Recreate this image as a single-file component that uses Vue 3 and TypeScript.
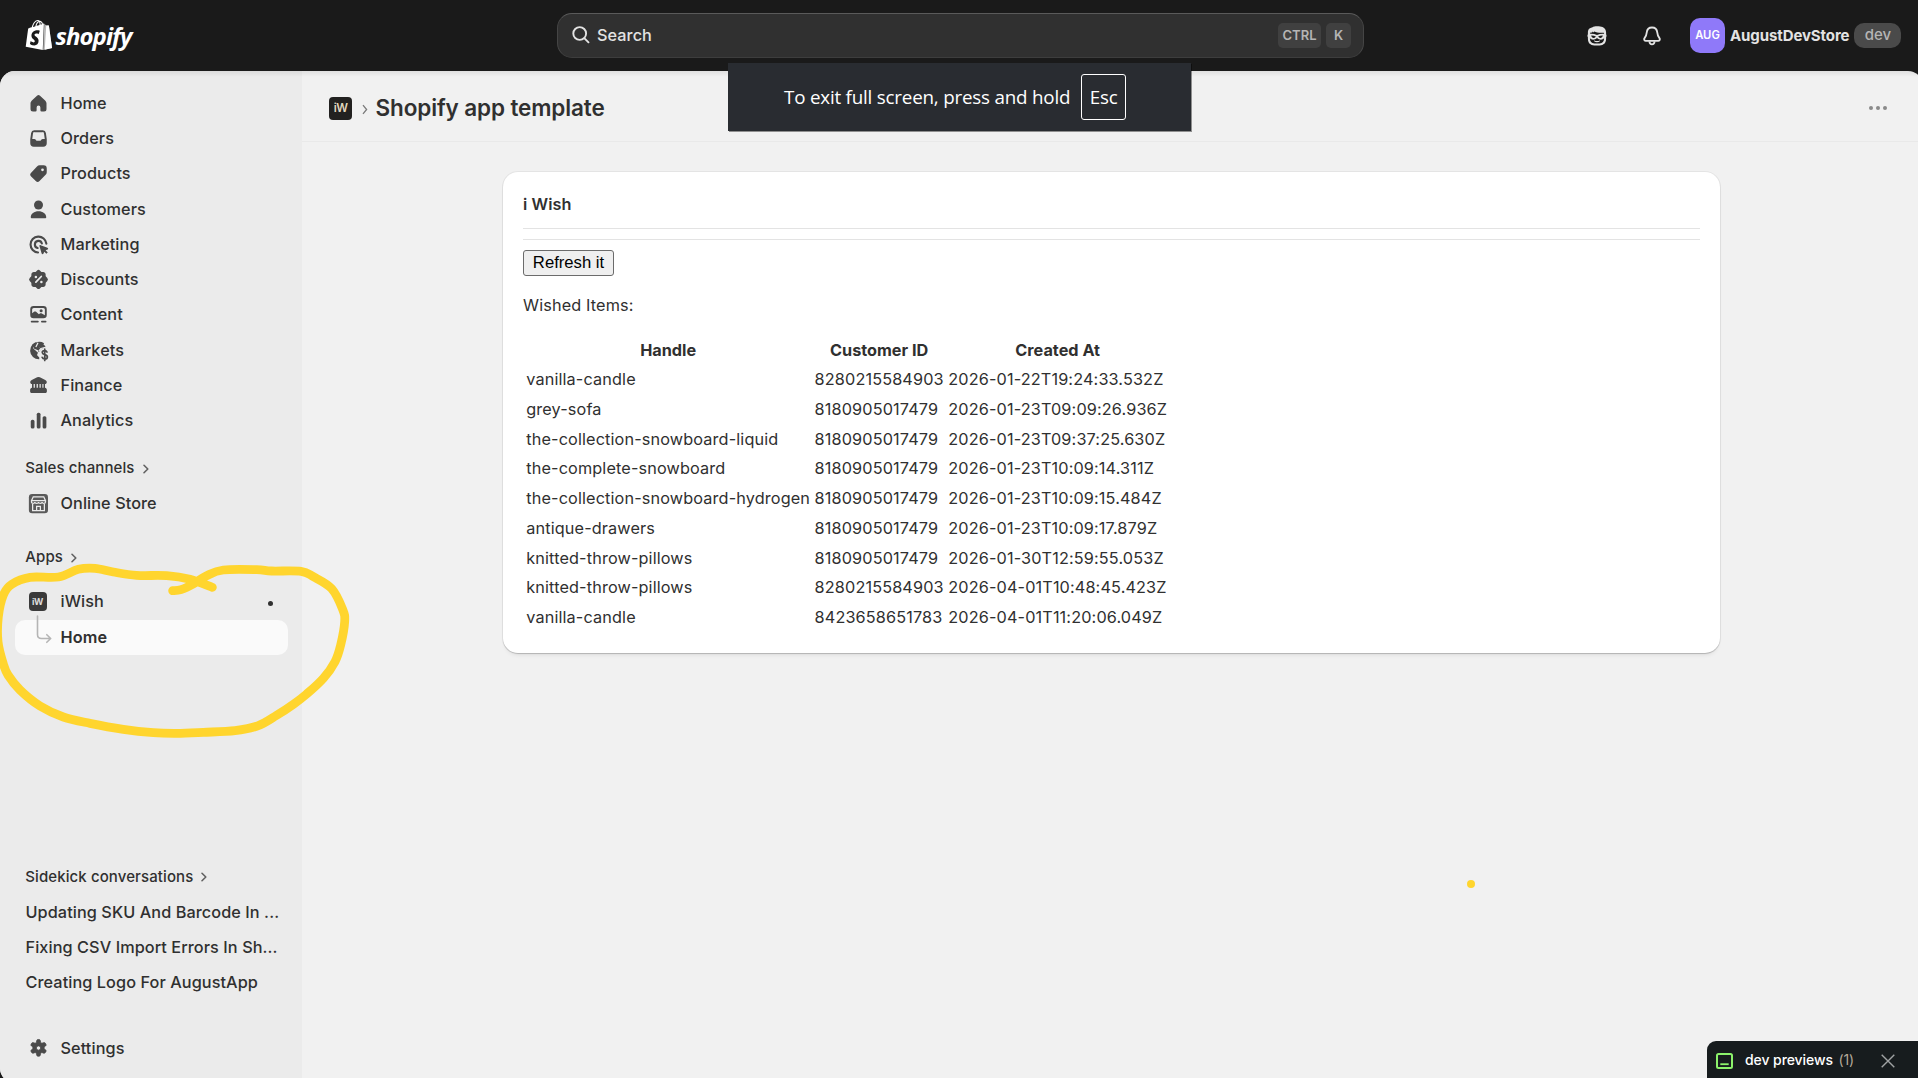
<script setup lang="ts">
interface NavItem {
  label: string
  icon: string
}

interface Wish {
  handle: string
  customer: string
  created: string
}

const bg = '#ebebeb'

const icons: Record<string, string> = {
  home: '<path d="M8.8 3.7a1.75 1.75 0 0 1 2.4 0l4.1 3.8c.7.7 1.1 1.6 1.1 2.5v4.4a2 2 0 0 1-2 2h-1.9a1 1 0 0 1-1-1v-2.3a1.5 1.5 0 0 0-3 0v2.3a1 1 0 0 1-1 1H5.6a2 2 0 0 1-2-2V10c0-1 .4-1.9 1.1-2.5z"/>',
  orders: '<path fill-rule="evenodd" d="M6.5 3.4h7a2.5 2.5 0 0 1 2.4 2.1l.7 5v3.3a2.9 2.9 0 0 1-2.8 2.8H6.2a2.9 2.9 0 0 1-2.8-2.8v-3.3l.7-5a2.5 2.5 0 0 1 2.4-2.1zM6.7 4.9a1.1 1.1 0 0 0-1.1 1L5 10.3h1.6c.5 0 .9.2 1.2.6l.4.6c.2.3.4.3.6.3h2.4c.3 0 .5-.1.6-.3l.4-.6c.3-.4.7-.6 1.2-.6H15l-.6-4.4a1.1 1.1 0 0 0-1.1-1z"/>',
  products: '<path fill-rule="evenodd" d="M10.9 3.4h3.2a2.5 2.5 0 0 1 2.5 2.5v3a3 3 0 0 1-.9 2.1l-4.9 5a2.1 2.1 0 0 1-3 0l-3.7-3.7a2.1 2.1 0 0 1 0-3l4.7-5a3 3 0 0 1 2.1-.9zM13.2 5.9a1.1 1.1 0 1 0 0 2.2 1.1 1.1 0 0 0 0-2.2z"/>',
  customers: '<circle cx="10" cy="6.4" r="3.6"/><path d="M3.8 16.2c0-3 2.8-4.9 6.2-4.9s6.2 1.9 6.2 4.9a.7.7 0 0 1-.7.7h-11a.7.7 0 0 1-.7-.7z"/>',
  marketing: '<g fill="none" stroke="currentColor" stroke-width="1.7" stroke-linecap="round"><path d="M16.3 9.3A6.35 6.35 0 1 0 9.6 16.35"/><path d="M12.7 9.2A2.85 2.85 0 1 0 9.3 12.75"/></g><path d="M10.8 11.4c-.2-.6.3-1.1.9-.9l5.5 2c.7.3.7 1.2 0 1.5l-1.5.6 1.7 1.7-1.1 1.1-1.7-1.7-.6 1.5c-.3.7-1.2.7-1.5 0z"/>',
  discounts: `<path d="M8.7 2.9a1.8 1.8 0 0 1 2.6 0l.6.6c.3.3.6.4 1 .4h.9c1 0 1.9.9 1.9 1.9v.9c0 .4.1.7.4 1l.8.8a2 2 0 0 1 0 2.8l-.8.8c-.3.3-.4.6-.4 1v.9c0 1-.9 1.9-1.9 1.9h-.9c-.4 0-.7.1-1 .4l-.6.6a1.8 1.8 0 0 1-2.6 0l-.6-.6c-.3-.3-.6-.4-1-.4h-.9c-1 0-1.9-.9-1.9-1.9v-.9c0-.4-.1-.7-.4-1l-.8-.8a2 2 0 0 1 0-2.8l.8-.8c.3-.3.4-.6.4-1v-.9c0-1 .9-1.9 1.900-1.9h.9c.4 0 .7-.1 1-.4z"/><path d="M7.9 12.1l4.300-4.500" stroke="${bg}" stroke-width="1.4" stroke-linecap="round"/><circle cx="7.900" cy="7.900" r="1" fill="${bg}"/><circle cx="12.300" cy="12" r="1" fill="${bg}"/>`,
  content: '<path fill-rule="evenodd" d="M6 3.2h8a2.6 2.6 0 0 1 2.6 2.6v4.6A2.6 2.6 0 0 1 14 13H6a2.6 2.6 0 0 1-2.6-2.6V5.8A2.6 2.6 0 0 1 6 3.2zM6.2 4.7A1.3 1.3 0 0 0 4.9 6v3l1.5-1.2c.5-.4 1.2-.4 1.7 0l2.2 2 .8-.6c.5-.3 1.1-.3 1.6 0l2.4 1.3V6a1.3 1.3 0 0 0-1.3-1.3zM12.1 5.7a1.25 1.25 0 1 1 0 2.5 1.25 1.25 0 0 1 0-2.5z"/><path d="M4.5 15.6h5M12.700 15.600h3" stroke="currentColor" stroke-width="1.4" stroke-linecap="round"/>',
  markets: `<path d="M10 3a7 7 0 1 0 .6 14v-1.5l-1.300-1.300c-.4-.4-.5-1-.2-1.500l.5-1-3.500-3.200c-.6-.6-.5-1.500.2-1.900l1.900-1.100L8 3.300z"/><path d="M9.200 3.100c-1.700.3-3.200 1.100-4.300 2.500l1.700 3 3 1.200.6 1.600 1.600-2.200-1-1.600 1.800-.5 1.900-3A7 7 0 0 0 9.200 3.100z"/><path d="M13.300 4.500l-2.500 3.200 1.300 1.200 3.600-1.700a7 7 0 0 0-2.400-2.700z"/><path d="M9.600 3.800l-1.700 3.400M10.300 10.400l1.700-2 3.700-1" fill="none" stroke="${bg}" stroke-width="1"/><path d="M16.800 11.200c-.3-.7-.9-1.100-1.900-1.100-1.100 0-1.900.6-1.900 1.500 0 2.200 4.100 1.100 4.100 3.500 0 1-.9 1.600-2 1.600s-1.900-.5-2.200-1.300M15 8.900v9" fill="none" stroke="currentColor" stroke-width="1.350" stroke-linecap="round"/>`,
  finance: '<path fill-rule="evenodd" d="M8.9 3.4a2.4 2.4 0 0 1 2.2 0l4.3 2.1c.8.4 1.2 1 1.2 1.8 0 .9-.6 1.5-1.4 1.5v2.9c.9.1 1.5.9 1.5 1.7v1.4c0 .7-.5 1.2-1.2 1.2h-11c-.7 0-1.2-.5-1.2-1.2v-1.4c0-.8.6-1.6 1.5-1.7V8.8c-.8 0-1.4-.6-1.4-1.5 0-.8.4-1.4 1.2-1.8zM6.1 8.8v2.9h1V8.8zM8.5 8.8v2.9h1V8.8zM10.8 8.800v2.900h1V8.800zM13.100 8.800v2.900h.9V8.800z"/>',
  analytics: '<rect x="3.8" y="9.4" width="3" height="7" rx="1.3"/><rect x="8.6" y="3.7" width="3" height="12.7" rx="1.3"/><rect x="13.3" y="6.5" width="3" height="9.9" rx="1.3"/>',
  settings: '<path fill-rule="evenodd" stroke="currentColor" stroke-width=".6" d="M8.5 3.900c.1-.7.6-1.100 1.200-1.100h.6c.6 0 1.100.4 1.200 1.100l.2 1.300 1 .6 1.300-.5c.6-.2 1.200 0 1.500.5l.4.7c.3.5.2 1.200-.3 1.500l-1.100.9v1.200l1.100.9c.5.4.6 1 .3 1.500l-.4.7c-.3.5-.9.7-1.500.5l-1.300-.5-1 .6-.2 1.300c-.1.7-.6 1.100-1.200 1.100h-.6c-.6 0-1.100-.4-1.200-1.100l-.2-1.300-1-.6-1.300.5c-.6.2-1.200 0-1.500-.5l-.4-.7c-.3-.5-.2-1.100.3-1.500l1.100-.9V8.900L4.400 8c-.5-.3-.6-1-.3-1.500l.4-.7c.3-.5.9-.7 1.500-.5l1.300.5 1-.6zM10 7.900a1.700 1.700 0 1 0 0 3.400 1.700 1.700 0 0 0 0-3.400z"/>',
}

const nav: NavItem[] = [
  { label: 'Home', icon: 'home' },
  { label: 'Orders', icon: 'orders' },
  { label: 'Products', icon: 'products' },
  { label: 'Customers', icon: 'customers' },
  { label: 'Marketing', icon: 'marketing' },
  { label: 'Discounts', icon: 'discounts' },
  { label: 'Content', icon: 'content' },
  { label: 'Markets', icon: 'markets' },
  { label: 'Finance', icon: 'finance' },
  { label: 'Analytics', icon: 'analytics' },
]

const conversations: string[] = [
  'Updating SKU And Barcode In ...',
  'Fixing CSV Import Errors In Sh...',
  'Creating Logo For AugustApp',
]

const wishes: Wish[] = [
  { handle: 'vanilla-candle', customer: '8280215584903', created: '2026-01-22T19:24:33.532Z' },
  { handle: 'grey-sofa', customer: '8180905017479', created: '2026-01-23T09:09:26.936Z' },
  { handle: 'the-collection-snowboard-liquid', customer: '8180905017479', created: '2026-01-23T09:37:25.630Z' },
  { handle: 'the-complete-snowboard', customer: '8180905017479', created: '2026-01-23T10:09:14.311Z' },
  { handle: 'the-collection-snowboard-hydrogen', customer: '8180905017479', created: '2026-01-23T10:09:15.484Z' },
  { handle: 'antique-drawers', customer: '8180905017479', created: '2026-01-23T10:09:17.879Z' },
  { handle: 'knitted-throw-pillows', customer: '8180905017479', created: '2026-01-30T12:59:55.053Z' },
  { handle: 'knitted-throw-pillows', customer: '8280215584903', created: '2026-04-01T10:48:45.423Z' },
  { handle: 'vanilla-candle', customer: '8423658651783', created: '2026-04-01T11:20:06.049Z' },
]

// Pen stroke sampled at a third of a pixel, smoothed with Catmull-Rom segments.
const penPoints: [number, number][] = [
  [518, 452], [543, 449], [580, 432], [620, 407], [670, 390], [770, 389], [815, 393], [903, 394],
  [940, 410], [995, 446], [1028, 508], [1034, 545], [1022, 615], [1005, 665], [970, 715], [920, 762],
  [880, 793], [830, 826], [775, 857], [705, 872], [610, 877], [530, 880], [460, 878], [370, 868],
  [270, 850], [190, 831], [120, 798], [60, 750], [24, 705], [10, 672], [-6, 605], [-5, 530],
  [10, 465], [35, 433], [90, 412], [175, 411], [235, 388], [285, 385], [340, 396], [410, 406],
  [500, 407], [570, 418], [637, 442],
]

function smooth(points: [number, number][]): string {
  const at = (i: number) => points[Math.max(0, Math.min(points.length - 1, i))]
  const f = (n: number) => (n / 3).toFixed(2)
  let d = `M${f(points[0][0])} ${f(points[0][1])}`
  for (let i = 0; i < points.length - 1; i++) {
    const [a, b, c, e] = [at(i - 1), at(i), at(i + 1), at(i + 2)]
    d += `C${f(b[0] + (c[0] - a[0]) / 6)} ${f(b[1] + (c[1] - a[1]) / 6)} ${f(c[0] - (e[0] - b[0]) / 6)} ${f(c[1] - (e[1] - b[1]) / 6)} ${f(c[0])} ${f(c[1])}`
  }
  return d
}

const penPath = smooth(penPoints)
</script>

<template>
  <div class="screen">
    <header class="topbar">
      <div class="brand">
        <svg class="bag" viewBox="0 0 24 24" width="30" height="30">
          <path fill="#b9b9b9" d="M15.337 23.979l7.216-1.561s-2.604-17.613-2.625-17.730c-.018-.116-.114-.192-.211-.192s-1.929-.136-1.929-.136-1.275-1.274-1.439-1.411c-.045-.037-.075-.057-.121-.074l-.914 21.104z" />
          <path fill="#fff" d="M16.600 23.700l5.953-1.282s-2.604-17.613-2.625-17.730c-.018-.116-.114-.192-.211-.192s-1.929-.136-1.929-.136z" />
          <path fill="#fff" d="M11.710 11.305s-.81-.424-1.774-.424c-1.447 0-1.504.906-1.504 1.141 0 1.232 3.240 1.715 3.240 4.629 0 2.295-1.440 3.760-3.406 3.760-2.354 0-3.540-1.465-3.540-1.465l.646-2.086s1.245 1.066 2.280 1.066c.675 0 .975-.545.975-.932 0-1.619-2.654-1.694-2.654-4.359-.034-2.237 1.571-4.416 4.827-4.416 1.257 0 1.875.361 1.875.361l-.945 2.715-.02.01zM11.170.83c.136 0 .271.038.405.135-.984.465-2.064 1.639-2.508 3.992-.656.213-1.293.405-1.889.578C7.697 3.750 8.951.84 11.170.84V.83zm1.235 2.949v.135c-.754.232-1.583.484-2.394.736.466-1.777 1.333-2.645 2.085-2.971.193.501.309 1.176.309 2.100zm.539-2.234c.694.074 1.141.867 1.429 1.755-.349.114-.735.231-1.158.366v-.252c0-.752-.096-1.371-.271-1.871v.002zm2.992 1.289c-.02 0-.06.021-.078.021s-.289.075-.714.210c-.423-1.233-1.176-2.370-2.508-2.370h-.115C12.135.209 11.669 0 11.265 0 8.159 0 6.675 3.877 6.210 5.846c-1.194.365-2.063.636-2.160.674-.675.213-.694.232-.772.870-.075.462-1.830 14.063-1.830 14.063L15.009 24l.927-21.166z" />
        </svg>
        <span class="wordmark">shopify</span>
      </div>
      <div class="search">
        <svg width="20" height="20" viewBox="0 0 20 20" fill="none" stroke="#e3e3e3" stroke-width="1.900" stroke-linecap="round">
          <circle cx="8.700" cy="8.500" r="6.400" />
          <path d="M13.500 13.300l4 4" />
        </svg>
        <span class="search-label">Search</span>
        <kbd class="ctrl">CTRL</kbd>
        <kbd class="key">K</kbd>
      </div>
      <div class="account">
        <svg class="sidekick" width="22" height="22" viewBox="0 0 22 22">
          <path fill="#e3e3e3" fill-rule="evenodd" d="M6.500 2.200C8 .9 14 .9 16.500 2.100 19 3.200 20 5 20.100 7.500v1.800c.6.7.6 2.300 0 3v1.500c0 4.200-2.500 6.600-6.400 6.600H8.300c-3.900 0-6.400-2.400-6.400-6.600v-1.500c-.6-.7-.6-2.300 0-3V6.800c.2-1.900 1.100-3.300 2.600-3.700zM4.800 7.200l-.9 1.700c2.500-.2 4.900.2 7.100 1.200 2.200-1 4.600-1.400 7.100-1.200l-.3-1.200c-4 .4-7.200-.1-9.600-1.300l-.8 1.200-.6-1.100-1 1.300zM5.200 10.600c.3 1.800 1.400 2.500 2.800 2.300.9-.2 1.600-.8 1.900-1.400-1.400-.7-3-1-4.700-.9zm11.600 0c-1.700-.1-3.300.2-4.700.9.300.6 1 1.200 1.900 1.400 1.400.2 2.500-.5 2.800-2.300zM3.900 13.300c.1 3.200 1.500 5.200 4.500 5.200h5.200c3 0 4.400-2 4.500-5.200-1.700 1.800-4.800 1.900-7.100-.3-2.300 2.200-5.400 2.100-7.100.3zM8.300 15.500c1.700.7 3.700.700 5.400 0 .4 0 .5.500.2.800-1.500 1.300-4.300 1.300-5.800 0-.3-.3-.2-.8.200-.8z" />
        </svg>
        <svg class="bell" width="20" height="22" viewBox="0 0 20 22" fill="none" stroke="#e3e3e3" stroke-width="1.800" stroke-linejoin="round">
          <path d="M10 2.500c-3 0-5 2.200-5.300 5.100-.2 2.500-.7 3.600-2 5.300-1 1.300-.7 2.700 1 3h12.600c1.700-.3 2-1.700 1-3-1.300-1.700-1.800-2.800-2-5.300C15 4.700 13 2.500 10 2.500z" />
          <path d="M7.400 16.300c.2 2 1.200 3 2.600 3s2.400-1 2.600-3" />
        </svg>
        <span class="avatar">AUG</span>
        <span class="store">AugustDevStore</span>
        <span class="devtag">dev</span>
      </div>
    </header>

    <div class="frame">
      <aside class="sidebar">
        <nav class="main-nav">
          <a v-for="item in nav" :key="item.label" class="nav-item">
            <svg class="nav-icon" viewBox="0 0 20 20" v-html="icons[item.icon]"></svg>
            <span>{{ item.label }}</span>
          </a>
        </nav>
        <div class="section sales">
          Sales channels
          <svg class="chev" width="8" height="10" viewBox="0 0 8 10"><path d="M2 1.300L5.800 5 2 8.700" /></svg>
        </div>
        <a class="nav-item">
          <svg class="nav-icon" viewBox="0 0 20 20">
            <rect x="2.300" y="2.300" width="15.300" height="15.500" rx="2.600" fill="#5a5a5a" />
            <g fill="none" stroke="#ebebeb" stroke-width="1">
              <path d="M5.800 4.600h8.400l1.400 3.200v1c0 1.500-2.500 1.500-2.700 0 0 1.500-2.700 1.500-2.900 0-.2 1.500-2.700 1.500-2.900 0-.2 1.500-2.700 1.500-2.700 0v-1zM4.600 7.700h10.800M5.300 10.300v5.400h9.400v-5.400M8.500 15.600v-3.300h3v3.300" />
            </g>
          </svg>
          <span>Online Store</span>
        </a>
        <div class="section apps">
          Apps
          <svg class="chev" width="8" height="10" viewBox="0 0 8 10"><path d="M2 1.300L5.800 5 2 8.700" /></svg>
        </div>
        <a class="nav-item app">
          <span class="app-icon">iW</span>
          <span>iWish</span>
          <i class="dot"></i>
        </a>
        <a class="nav-item active">
          <svg class="branch" width="17" height="30" viewBox="0 0 17 30" fill="none" stroke="#b5b5b5" stroke-width="1.600" stroke-linecap="round" stroke-linejoin="round">
            <path d="M1.500 1v18.500q0 4 4 4h8.700M10.800 19.700l3.900 3.800-3.900 3.800" />
          </svg>
          <span>Home</span>
        </a>
        <div class="spacer"></div>
        <div class="section talks">
          Sidekick conversations
          <svg class="chev" width="8" height="10" viewBox="0 0 8 10"><path d="M2 1.300L5.800 5 2 8.700" /></svg>
        </div>
        <a v-for="talk in conversations" :key="talk" class="nav-item talk">{{ talk }}</a>
        <a class="nav-item settings">
          <svg class="nav-icon" viewBox="0 0 20 20" v-html="icons.settings"></svg>
          <span>Settings</span>
        </a>
      </aside>

      <main class="content">
        <div class="titlebar">
          <span class="title-icon">iW</span>
          <svg class="crumb" width="8" height="11" viewBox="0 0 8 11"><path d="M2 1.200l3.600 4.300L2 9.800" /></svg>
          <h1>Shopify app template</h1>
          <span class="more"><i></i><i></i><i></i></span>
        </div>
        <section class="card">
          <h2>i Wish</h2>
          <hr class="rule first" />
          <hr class="rule" />
          <button class="refresh" type="button">Refresh it</button>
          <p>Wished Items:</p>
          <table>
            <thead>
              <tr><th>Handle</th><th>Customer ID</th><th>Created At</th></tr>
            </thead>
            <tbody>
              <tr v-for="(wish, i) in wishes" :key="i">
                <td>{{ wish.handle }}</td>
                <td>{{ wish.customer }}</td>
                <td>{{ wish.created }}</td>
              </tr>
            </tbody>
          </table>
        </section>
      </main>
    </div>

    <div class="toast">
      <span>To exit full screen, press and hold</span>
      <span class="esc">Esc</span>
    </div>

    <div class="previews">
      <svg width="17" height="16" viewBox="0 0 17 16" fill="none" stroke="#8cf26b" stroke-width="2">
        <rect x="1" y="1" width="15" height="14" rx="1.500" />
        <path d="M4.300 11.200h8.400" stroke-width="1.800" />
      </svg>
      <span class="previews-label">dev previews</span>
      <span class="count">(1)</span>
      <svg class="close" width="14" height="14" viewBox="0 0 14 14" stroke="#a0a3a4" stroke-width="1.400"><path d="M.7.7l12.600 12.600M13.300.7L.7 13.300" /></svg>
    </div>

    <svg class="pen" width="360" height="200" viewBox="0 120 360 200">
      <path :d="penPath" />
    </svg>
    <i class="pen-dot"></i>
  </div>
</template>

<style>
body {
  background: #1a1a1a;
}
</style>

<style scoped>
.screen {
  position: relative;
  width: 1918px;
  height: 1078px;
  overflow: hidden;
  background: #1a1a1a;
  color: #303030;
  font: 500 16.25px/25px Inter, sans-serif;
  display: flex;
  flex-direction: column;
  box-sizing: border-box;
}
.screen * {
  box-sizing: border-box;
}
.topbar {
  height: 71px;
  flex: none;
  display: flex;
  align-items: flex-start;
}
.brand {
  width: 557px;
  padding: 20px 0 0 23.5px;
  display: flex;
}
.wordmark {
  margin: 1px 0 0 2px;
  color: #fff;
  font: italic 700 24px/30px "Open Sans", "Noto Sans", sans-serif;
  letter-spacing: -0.95px;
}
.search {
  width: 807px;
  height: 45px;
  margin-top: 13px;
  padding: 0 12px 1px 13px;
  display: flex;
  align-items: center;
  background: #303030;
  border: 1px solid #454545;
  border-top-color: #5a5a5a;
  border-bottom-color: #3d3d3d;
  border-radius: 15px;
  color: #e3e3e3;
}
.search-label {
  margin-left: 6px;
  flex: 1;
  letter-spacing: 0.06px;
}
kbd {
  height: 25px;
  border-radius: 5px;
  background: #404040;
  color: #b5b5b5;
  font: 600 13px/24px Inter, sans-serif;
  text-align: center;
}
.ctrl {
  width: 43px;
}
.key {
  width: 25px;
  margin-left: 5px;
}
.account {
  flex: 1;
  height: 35px;
  margin-top: 18px;
  display: flex;
  align-items: center;
}
.sidekick {
  margin-left: 222px;
}
.bell {
  margin-left: 34px;
}
.avatar {
  width: 35px;
  height: 35px;
  margin-left: 28px;
  border-radius: 10px;
  background: #8f79f9;
  color: #fff;
  font-size: 11.25px;
  font-weight: 600;
  line-height: 34px;
  text-align: center;
}
.store {
  margin: -1px 0 0 5px;
  color: #e3e3e3;
  font-size: 15px;
  font-weight: 650;
  letter-spacing: -0.1px;
}
.devtag {
  width: 47px;
  height: 25px;
  margin-left: 5px;
  border-radius: 10px;
  background: #4a4a4a;
  color: #b5b5b5;
  font-size: 15px;
  line-height: 24px;
  text-align: center;
}
.frame {
  width: 1923px;
  height: 1012px;
  flex: none;
  display: flex;
  overflow: hidden;
  border-radius: 15px;
  background: #f1f1f1;
}
.sidebar {
  width: 302px;
  height: 1007px;
  background: linear-gradient(rgba(0, 0, 0, 0.07), transparent 6px), #ebebeb;
  display: flex;
  flex-direction: column;
  padding: 14.8px 14px 12px 15px;
}
.main-nav {
  display: flex;
  flex-direction: column;
}
.nav-item {
  height: 35.25px;
  flex: none;
  display: flex;
  align-items: center;
  padding-left: 10.5px;
  letter-spacing: 0.08px;
}
.nav-icon {
  width: 25px;
  height: 25px;
  margin: 0 10px 0 0;
  fill: #4a4a4a;
  color: #4a4a4a;
}
.section {
  height: 35px;
  flex: none;
  display: flex;
  align-items: center;
  padding-left: 10.3px;
  font-size: 15px;
  letter-spacing: 0.1px;
}
.chev {
  margin-left: 7px;
  margin-top: 2px;
  fill: none;
  stroke: #616161;
  stroke-width: 1.6;
  stroke-linecap: round;
  stroke-linejoin: round;
}
.sales {
  margin-top: 12px;
}
.sales + .nav-item {
  margin-top: 0.6px;
}
.apps {
  margin-top: 17.9px;
}
.app {
  margin-top: 9.7px;
}
.app-icon {
  width: 18px;
  height: 19px;
  margin: 0 14px 0 3px;
  border-radius: 4px;
  background: #3a3a3a;
  color: #ddd;
  font: 700 9px/19px Inter, sans-serif;
  letter-spacing: -0.4px;
  text-align: center;
}
.dot {
  width: 5px;
  height: 5px;
  margin: 4px 15px 0 auto;
  border-radius: 50%;
  background: #303030;
}
.active {
  position: relative;
  width: 273px;
  height: 35px;
  margin-top: 1px;
  padding-left: 45.5px;
  border-radius: 10px;
  background: #fafafa;
  font-weight: 600;
}
.branch {
  position: absolute;
  left: 21px;
  top: -5px;
}
.spacer {
  flex: 1;
}
.talks {
  margin-bottom: 1px;
}
.talk {
  height: 35px;
  white-space: nowrap;
}
.settings {
  margin-top: 31px;
}
.content {
  flex: 1;
  margin-right: 5px;
  background: linear-gradient(rgba(0, 0, 0, 0.07), transparent 6px);
}
.titlebar {
  height: 71px;
  padding: 4px 31px 0 27px;
  display: flex;
  align-items: center;
  border-bottom: 1px solid #e9e9e9;
}
.title-icon {
  width: 23px;
  height: 23px;
  border-radius: 4px;
  background: #222120;
  color: #e0d8bf;
  font: 600 11.5px/23px Inter, sans-serif;
  letter-spacing: -0.5px;
  text-align: center;
}
.crumb {
  margin: 3px 6.5px 0 9px;
  fill: none;
  stroke: #7a7a7a;
  stroke-width: 1.3;
}
h1 {
  margin: 0;
  flex: 1;
  font-size: 22.5px;
  line-height: 30px;
  font-weight: 600;
  letter-spacing: -0.12px;
}
.more {
  display: flex;
  gap: 3px;
}
.more i {
  width: 4px;
  height: 4px;
  border-radius: 50%;
  background: #8a8a8a;
}
.card {
  width: 1217px;
  height: 481px;
  margin: 30px 0 0 201px;
  padding: 20px;
  border-radius: 15px;
  background: #fff;
  box-shadow: 0 1px 1px rgba(0, 0, 0, 0.16), 0 0 0 1px rgba(0, 0, 0, 0.05), 0 4px 4px -2px rgba(0, 0, 0, 0.08);
}
h2 {
  margin: 0;
  font-size: 16.25px;
  line-height: 25px;
  font-weight: 600;
  letter-spacing: 0.08px;
}
.rule {
  height: 1px;
  margin: 0;
  border: 0;
  background: #e3e3e3;
}
.first {
  margin: 11px 0 10px;
}
.refresh {
  display: block;
  width: 91px;
  height: 26px;
  margin-top: 10px;
  padding: 0;
  border: 1px solid #6b6b6b;
  border-radius: 3px;
  background: #efefef;
  color: #000;
  font: 16.667px/24px "Liberation Sans", Arial, sans-serif;
}
p {
  margin: 17px 0 0;
  font-weight: 400;
  letter-spacing: 0.13px;
}
table {
  margin-top: 17px;
  border-collapse: separate;
  border-spacing: 2.5px 0;
}
th,
td {
  height: 29.75px;
  padding: 0 1.25px;
  white-space: nowrap;
  font-weight: 400;
  letter-spacing: 0.13px;
}
th {
  padding-top: 1px;
  font-weight: 650;
  letter-spacing: 0;
}
.toast {
  position: absolute;
  left: 728px;
  top: 63px;
  width: 463px;
  height: 68px;
  padding-left: 56px;
  display: flex;
  align-items: center;
  gap: 11px;
  background: #292c31;
  box-shadow: 1px 1px 0 rgba(0, 0, 0, 0.4);
  color: #fff;
  font: 400 18.8px/28px "Open Sans", "Noto Sans", sans-serif;
  letter-spacing: -0.2px;
  white-space: nowrap;
}
.esc {
  width: 45px;
  height: 46px;
  border: 1.5px solid #fff;
  border-radius: 3px;
  line-height: 44px;
  text-align: center;
}
.previews {
  position: absolute;
  right: 0;
  bottom: 0;
  width: 211px;
  height: 37px;
  padding: 3px 23px 0 9px;
  display: flex;
  align-items: center;
  border-top-left-radius: 9px;
  background: #171c1e;
  color: #fff;
  font-size: 14px;
  letter-spacing: -0.08px;
}
.previews-label {
  margin: -3px 0 0 12px;
}
.count {
  margin: -3px 0 0 5.5px;
  color: #b5a999;
  font-weight: 400;
}
.close {
  margin-left: auto;
}
.pen {
  position: absolute;
  left: 0;
  top: 560px;
}
.pen path {
  fill: none;
  stroke: #ffd52e;
  stroke-width: 8.8;
  stroke-linecap: round;
  stroke-linejoin: round;
}
.pen-dot {
  position: absolute;
  left: 1467px;
  top: 879.5px;
  width: 8px;
  height: 8px;
  border-radius: 50%;
  background: #ffd52e;
}
</style>
